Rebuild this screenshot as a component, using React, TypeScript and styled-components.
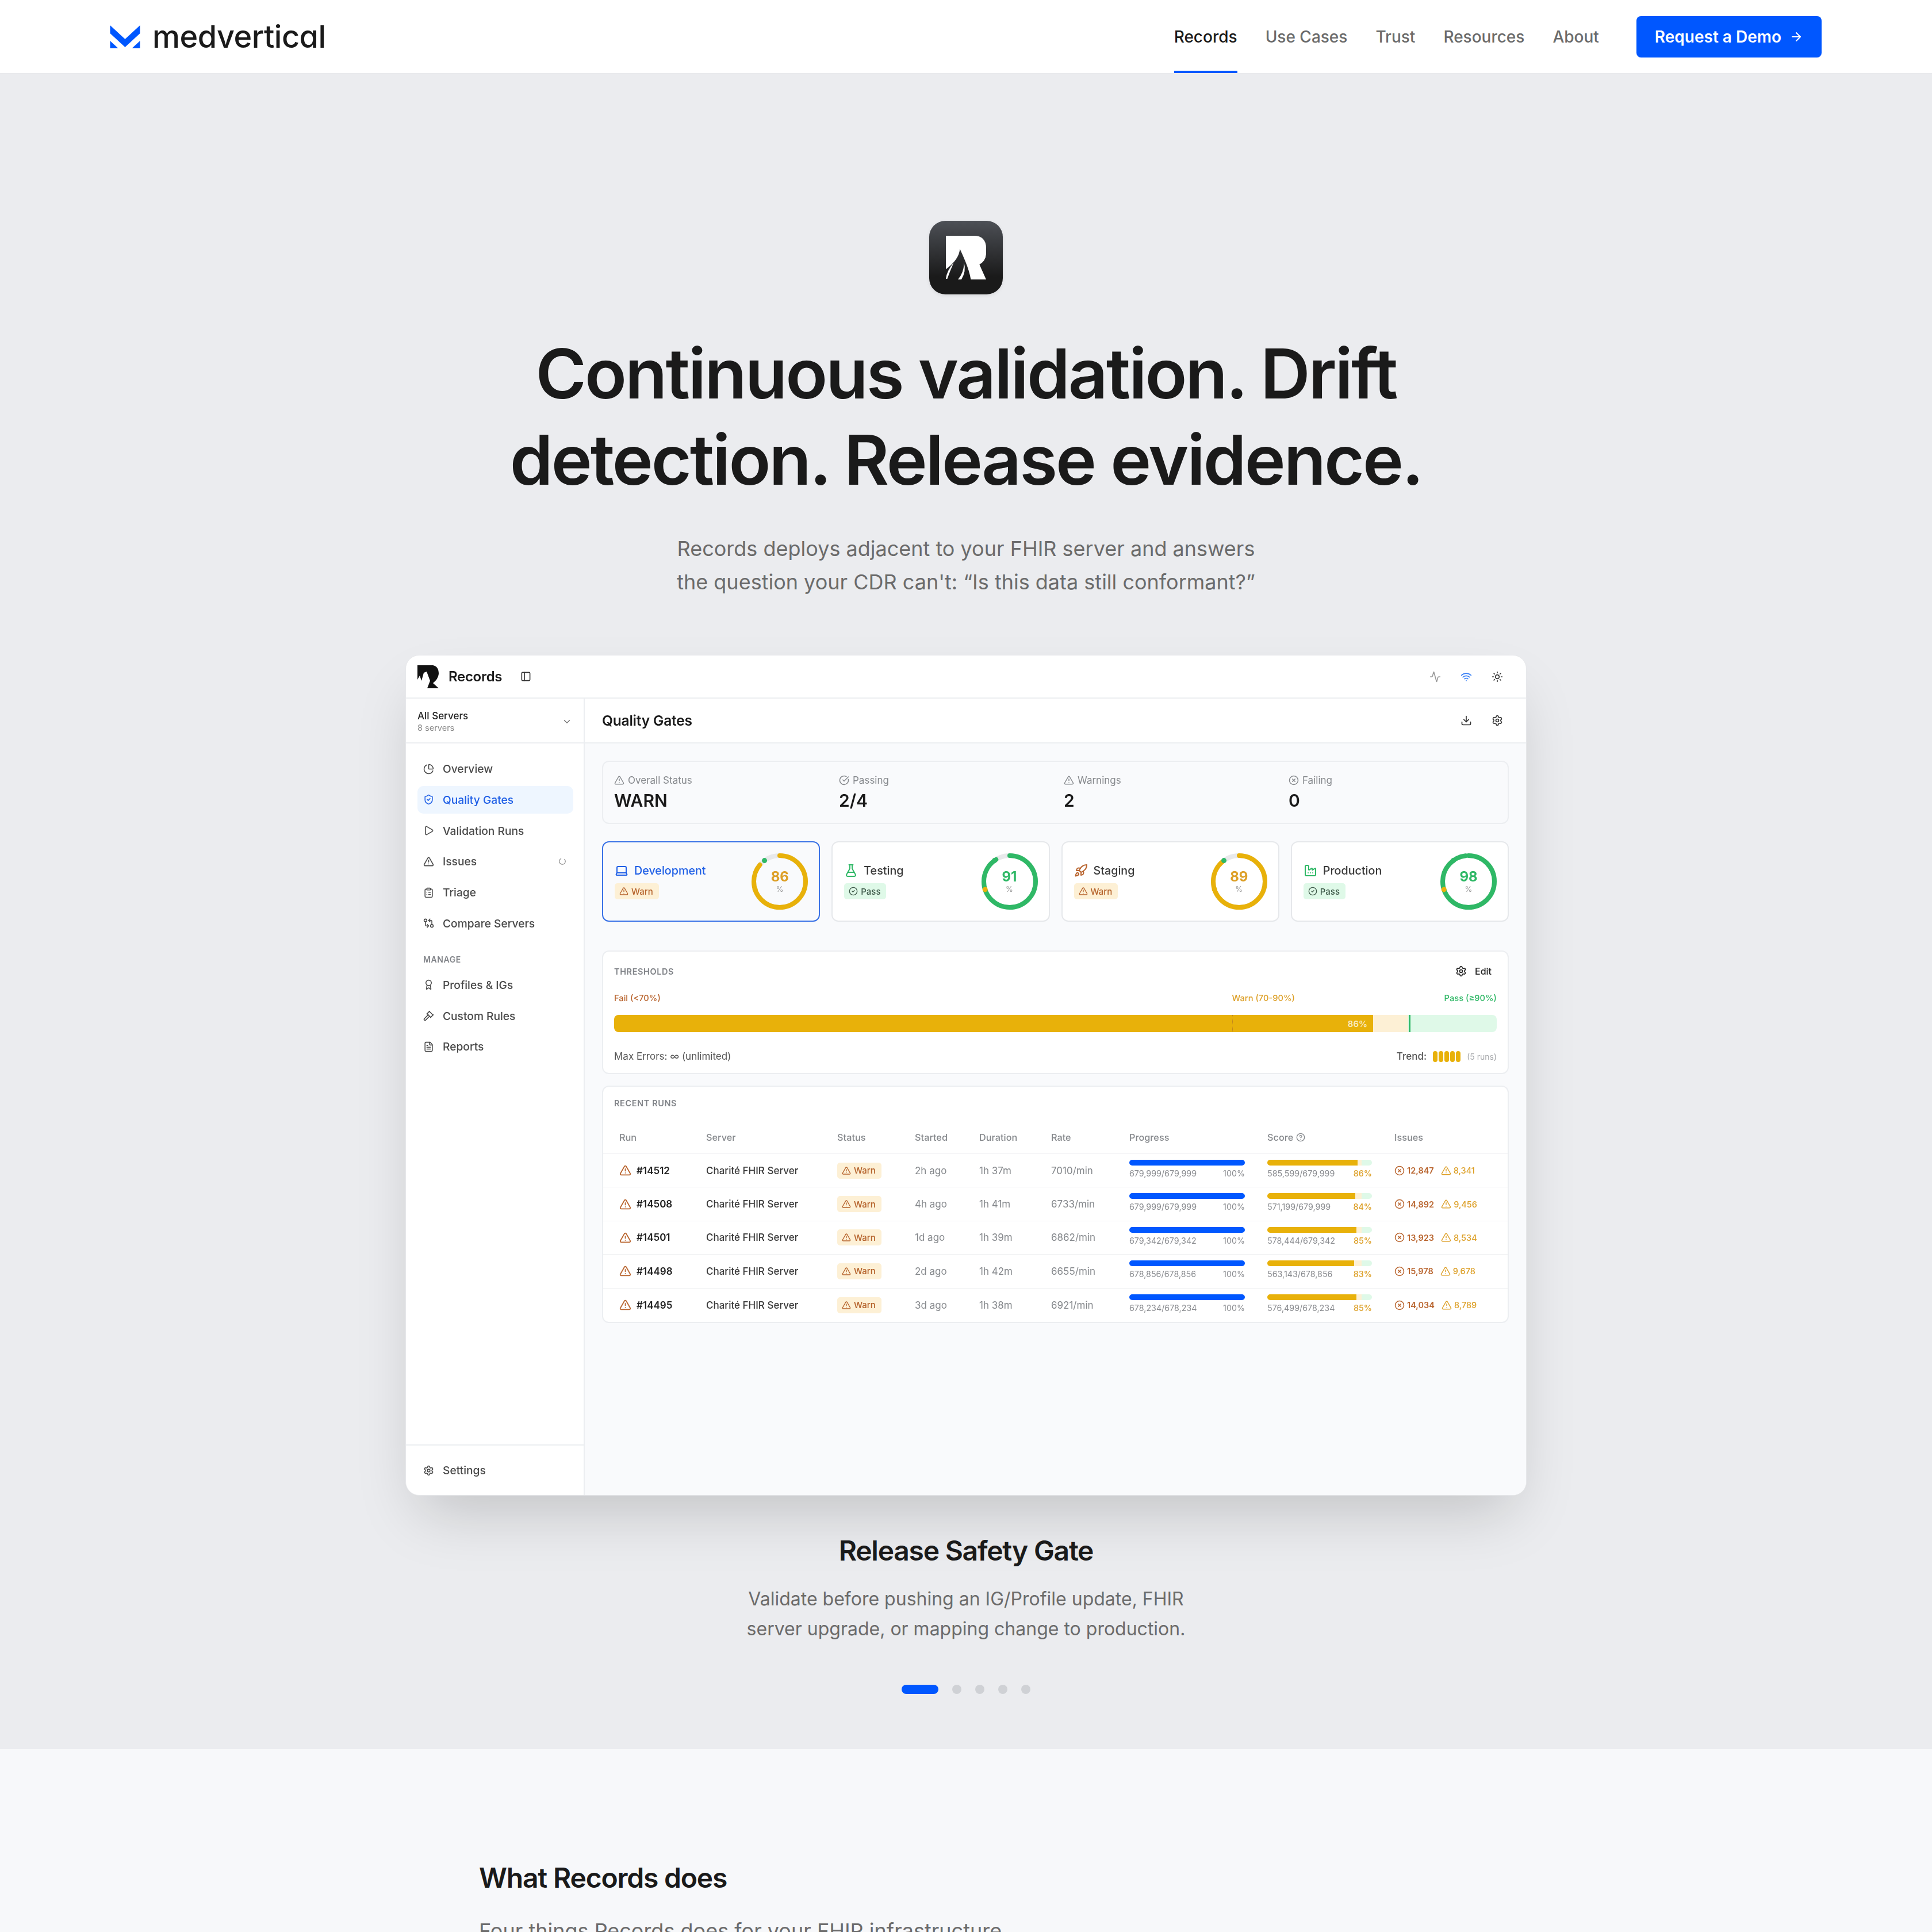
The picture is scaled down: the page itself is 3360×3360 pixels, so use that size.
import * as React from "react";
import styled, { createGlobalStyle } from "styled-components";
import {
    Activity, ArrowRight, Award, ChartPie, ChevronDown, CircleCheck, CircleCheckBig, CircleHelp, CircleX,
    ClipboardList, Download, Factory, FileText, FlaskConical, Gavel, GitCompareArrows, Laptop, LoaderCircle,
    PanelLeft, Play, Rocket, Settings, ShieldCheck, Sun, TriangleAlert, Wifi
} from "lucide-react";

const BRAND = "#0057ff";
const APP_BLUE = "#1f5fe6";
const WARN = "#e8b10a";
const WARN_TEXT = "#dda028";
const FAIL_TEXT = "#b9652f";
const PASS = "#2fb866";

const GlobalStyle = createGlobalStyle`
    html, body {
        margin: 0;
        padding: 0;
        background: #f7f8fa;
    }
    body {
        font-family: Inter, "Liberation Sans", sans-serif;
        color: #1a1a1a;
    }
    #root {
        height: 3360px;
        overflow: hidden;
    }
`;

const Header = styled.header`
    height: 128px;
    box-sizing: border-box;
    background: #fff;
    border-bottom: 1px solid #e8e9ec;
    padding: 0 192px 0 191px;
    display: flex;
    align-items: stretch;
    justify-content: space-between;
`;

const Brand = styled.div`
    display: flex;
    align-items: center;
    gap: 21px;
`;

const Wordmark = styled.span`
    font-size: 54px;
    font-weight: 500;
    letter-spacing: -0.5px;
    font-feature-settings: "cv11";
    color: #1a1a1a;
    line-height: 1;
`;

const TopNav = styled.nav`
    display: flex;
    align-items: stretch;
    gap: 49px;
`;

const TopLink = styled.a<{ $active?: boolean }>`
    display: flex;
    align-items: center;
    box-sizing: border-box;
    font-size: 28px;
    font-weight: 500;
    color: ${(p) => (p.$active ? "#1a1a1a" : "#6b6b6b")};
    border-bottom: 4px solid ${(p) => (p.$active ? BRAND : "transparent")};
    padding-top: 4px;
`;

const DemoButton = styled.button`
    align-self: center;
    height: 72px;
    margin-left: 16px;
    padding: 0 32px;
    display: flex;
    align-items: center;
    gap: 14px;
    border: 0;
    border-radius: 8px;
    background: ${BRAND};
    color: #fff;
    font-family: inherit;
    font-size: 28px;
    font-weight: 600;
`;

const Hero = styled.section`
    background: #ebecef;
    padding: 256px 0 96px;
    display: flex;
    flex-direction: column;
    align-items: center;
`;

const AppIcon = styled.div`
    width: 128px;
    height: 128px;
    border-radius: 28px;
    background: linear-gradient(180deg, #4d5056 0%, #1a1a1a 76%);
    box-shadow: 0 2px 6px rgba(0, 0, 0, 0.08);
    display: flex;
`;

const Title = styled.h1`
    margin: 63px 0 0;
    font-size: 120px;
    line-height: 150px;
    font-weight: 600;
    letter-spacing: -3px;
    text-align: center;
    color: #1a1a1a;
`;

const Lead = styled.p`
    margin: 50px 0 0;
    font-size: 36px;
    line-height: 58px;
    font-weight: 400;
    text-align: center;
    color: #6b6b6b;
`;

const Window = styled.div`
    margin-top: 98px;
    width: 1950px;
    height: 1462px;
    box-sizing: border-box;
    background: #fff;
    border: 1px solid #e7e8eb;
    border-radius: 24px;
    box-shadow: 0 50px 100px -24px rgba(0, 0, 0, 0.18);
    overflow: hidden;
    display: flex;
    flex-direction: column;
`;

const AppBar = styled.div`
    height: 75px;
    flex: none;
    box-sizing: border-box;
    border-bottom: 2px solid #eceef1;
    padding: 0 40px 0 20px;
    display: flex;
    align-items: center;
    filter: blur(0.4px);
`;

const AppName = styled.span`
    margin-left: 16px;
    font-size: 24px;
    font-weight: 600;
    letter-spacing: -0.3px;
`;

const PanelToggle = styled(PanelLeft)`
    margin-left: 32px;
    color: #333;
`;

const BarActions = styled.div`
    margin-left: auto;
    display: flex;
    align-items: center;
    gap: 34px;
`;

const AppBody = styled.div`
    flex: 1;
    min-height: 0;
    display: flex;
    filter: blur(0.4px);
`;

const Sidebar = styled.aside`
    width: 311px;
    flex: none;
    box-sizing: border-box;
    border-right: 2px solid #eceef1;
    display: flex;
    flex-direction: column;
`;

const ServerPicker = styled.div`
    height: 78px;
    flex: none;
    box-sizing: border-box;
    border-bottom: 2px solid #eceef1;
    padding: 3px 20px 0;
    display: flex;
    align-items: center;
    justify-content: space-between;
`;

const ServerName = styled.div`
    font-size: 17px;
    line-height: 22px;
    font-weight: 500;
    color: #222;
`;

const ServerCount = styled.div`
    font-size: 14.5px;
    line-height: 20px;
    color: #888;
`;

const SideNav = styled.nav`
    flex: 1;
    padding: 20px 18px 0 20px;
`;

const NavGroup = styled.div`
    display: flex;
    flex-direction: column;
    gap: 5.75px;
`;

const NavItem = styled.div<{ $active?: boolean }>`
    height: 48px;
    padding: 0 12px 0 10px;
    display: flex;
    align-items: center;
    gap: 15px;
    border-radius: 10px;
    font-size: 19.2px;
    font-weight: 500;
    color: ${(p) => (p.$active ? APP_BLUE : "#4a4a4a")};
    background: ${(p) => (p.$active ? "#eef6ff" : "transparent")};
`;

const NavSpinner = styled(LoaderCircle)`
    margin-left: auto;
    transform: rotate(-45deg);
    color: #888;
`;

const NavSection = styled.div`
    margin: 29px 10px 10px;
    font-size: 14px;
    line-height: 20px;
    font-weight: 600;
    letter-spacing: 0.6px;
    color: #808388;
`;

const SideFooter = styled.div`
    height: 88px;
    flex: none;
    box-sizing: border-box;
    border-top: 2px solid #eceef1;
    padding: 0 30px;
    display: flex;
    align-items: center;
    gap: 15px;
    font-size: 19.2px;
    font-weight: 500;
    color: #4a4a4a;
`;

const Main = styled.main`
    flex: 1;
    min-width: 0;
    background: #f9fafc;
    display: flex;
    flex-direction: column;
`;

const MainHead = styled.div`
    height: 78px;
    flex: none;
    box-sizing: border-box;
    background: #fff;
    border-bottom: 2px solid #eceef1;
    padding: 0 40px 0 30px;
    display: flex;
    align-items: center;
    justify-content: space-between;
`;

const MainTitle = styled.h2`
    margin: 0;
    font-size: 24.5px;
    font-weight: 600;
    letter-spacing: -0.2px;
`;

const Content = styled.div`
    padding: 30px 30px 0;
    display: flex;
    flex-direction: column;
`;

const Summary = styled.div`
    height: 110px;
    box-sizing: border-box;
    border: 2px solid #eceef1;
    border-radius: 12px;
    padding-left: 19px;
    display: grid;
    grid-template-columns: repeat(4, 391px);
    align-content: center;
`;

const SummaryLabel = styled.div`
    display: flex;
    align-items: center;
    gap: 6px;
    font-size: 17px;
    line-height: 22px;
    color: #85888c;
`;

const SummaryValue = styled.div`
    margin-top: 5px;
    font-size: 30px;
    line-height: 38px;
    font-weight: 600;
    color: #1a1a1a;
`;

const EnvGrid = styled.div`
    margin-top: 30px;
    display: grid;
    grid-template-columns: repeat(4, 1fr);
    gap: 20px;
`;

const EnvCard = styled.div<{ $active?: boolean }>`
    height: 140px;
    box-sizing: border-box;
    border: ${(p) => (p.$active ? `2px solid #3a72e6` : "2px solid #e6e8eb")};
    border-radius: 12px;
    background: ${(p) => (p.$active ? "#f9fafc" : "#fff")};
    padding: 0 19px 0 20px;
    display: flex;
    align-items: center;
    justify-content: space-between;
`;

const EnvName = styled.div<{ $active?: boolean }>`
    display: flex;
    align-items: center;
    gap: 10px;
    font-size: 19.7px;
    line-height: 24px;
    font-weight: 500;
    color: ${(p) => (p.$active ? APP_BLUE : "#3a3a3a")};
`;

const Badge = styled.span<{ $pass?: boolean }>`
    height: 28px;
    box-sizing: border-box;
    padding: 0 10px 0 8px;
    display: inline-flex;
    align-items: center;
    gap: 5px;
    border-radius: 5px;
    font-size: 15px;
    font-weight: 500;
    background: ${(p) => (p.$pass ? "#dff9e8" : "#fdf0d5")};
    color: ${(p) => (p.$pass ? "#3f5a4a" : "#b5622b")};
`;

const EnvBadgeRow = styled.div`
    margin-top: 10px;
`;

const RingBox = styled.div`
    position: relative;
    width: 98px;
    height: 98px;
    flex: none;
`;

const RingText = styled.div<{ $pass?: boolean }>`
    position: absolute;
    inset: 0;
    display: flex;
    flex-direction: column;
    align-items: center;
    justify-content: center;
    font-size: 24px;
    line-height: 26px;
    font-weight: 700;
    color: ${(p) => (p.$pass ? PASS : WARN_TEXT)};
`;

const RingUnit = styled.span`
    font-size: 13px;
    line-height: 16px;
    font-weight: 400;
    color: #999;
`;

const Card = styled.section<{ $top: number }>`
    margin-top: ${(p) => p.$top}px;
    box-sizing: border-box;
    background: #fff;
    border: 2px solid #eceef1;
    border-radius: 12px;
`;

const ThresholdBody = styled.div`
    padding: 22px 19px 17px;
`;

const CardHead = styled.div`
    height: 24px;
    display: flex;
    align-items: center;
    justify-content: space-between;
`;

const CardLabel = styled.div`
    font-size: 14.5px;
    font-weight: 600;
    letter-spacing: 0.6px;
    color: #808388;
`;

const EditLink = styled.div`
    display: flex;
    align-items: center;
    gap: 14px;
    padding-right: 9px;
    font-size: 16px;
    font-weight: 500;
    color: #222;
`;

const LimitRow = styled.div`
    margin-top: 25px;
    display: grid;
    grid-template-columns: 70% 1fr auto;
    font-size: 14.7px;
    line-height: 20px;
    font-weight: 500;
`;

const Limit = styled.span<{ $color: string }>`
    color: ${(p) => p.$color};
`;

const BigTrack = styled.div`
    position: relative;
    margin-top: 19px;
    height: 30px;
    border-radius: 8px;
    overflow: hidden;
    background: linear-gradient(to right, #fdf0d5 90%, #dff9e8 90%);
`;

const BigFill = styled.div`
    height: 100%;
    background: ${WARN};
    display: flex;
    align-items: center;
    justify-content: flex-end;
    padding-right: 10px;
    box-sizing: border-box;
    font-size: 15px;
    font-weight: 600;
    color: rgba(255, 255, 255, 0.75);
`;

const Marker = styled.div<{ $at: number; $kind: "warn" | "pass" }>`
    position: absolute;
    top: 0;
    bottom: 0;
    left: ${(p) => p.$at}%;
    border-left: ${(p) => (p.$kind === "pass" ? `3px solid ${PASS}` : "1px dotted rgba(168, 106, 42, 0.6)")};
`;

const ThresholdFoot = styled.div`
    margin-top: 30px;
    height: 24px;
    display: flex;
    align-items: center;
    justify-content: space-between;
    font-size: 17px;
    color: #555;
`;

const Trend = styled.div`
    display: flex;
    align-items: center;
    font-weight: 500;
`;

const TrendPills = styled.div`
    margin: 0 11px 0 11px;
    display: flex;
    gap: 2px;
`;

const TrendPill = styled.i`
    width: 8px;
    height: 19px;
    border-radius: 4px;
    background: ${WARN};
`;

const TrendNote = styled.span`
    font-size: 14px;
    font-weight: 400;
    color: #a5a7aa;
`;

const RunsLabel = styled(CardLabel)`
    padding: 19px 19px 0;
    line-height: 20px;
`;

const RunGrid = styled.div<{ $head?: boolean }>`
    display: grid;
    grid-template-columns: 151px 228px 135px 112px 125px 136px 240px 221px 1fr;
    align-items: center;
    padding-left: 28px;
    height: ${(p) => (p.$head ? "58px" : "58.4px")};
    box-sizing: border-box;
    margin-top: ${(p) => (p.$head ? "20px" : "0")};
    border-bottom: 1px solid #f0f1f3;
    font-size: 17px;
    &:last-child {
        border-bottom: 0;
    }
`;

const HeadCell = styled.div`
    display: flex;
    align-items: center;
    gap: 5px;
    font-size: 16.3px;
    font-weight: 500;
    color: #85888c;
`;

const RunId = styled.div`
    display: flex;
    align-items: center;
    gap: 9px;
    font-weight: 600;
    font-size: 17px;
    color: #222;
`;

const ServerCell = styled.div`
    font-weight: 500;
    color: #3a3a3a;
`;

const MutedCell = styled.div`
    color: #85888c;
`;

const MeterCell = styled.div<{ $width: number }>`
    width: ${(p) => p.$width}px;
    align-self: start;
    padding-top: 10px;
`;

const Track = styled.div<{ $score?: boolean }>`
    height: 10px;
    border-radius: 5px;
    overflow: hidden;
    background: ${(p) => (p.$score ? "linear-gradient(to right, #fdf0d5 90%, #dff9e8 90%)" : "#e8ecf2")};
`;

const Fill = styled.div<{ $score?: boolean }>`
    height: 100%;
    background: ${(p) => (p.$score ? WARN : BRAND)};
`;

const MeterText = styled.div`
    margin-top: 4px;
    display: flex;
    justify-content: space-between;
    font-size: 14.3px;
    line-height: 20px;
    color: #8a8c90;
`;

const Percent = styled.span<{ $warn?: boolean }>`
    font-weight: ${(p) => (p.$warn ? 500 : 400)};
    color: ${(p) => (p.$warn ? WARN_TEXT : "#8a8c90")};
`;

const IssueCell = styled.div`
    display: flex;
    align-items: center;
    gap: 4px;
    font-size: 14.5px;
    font-weight: 600;
`;

const IssueCount = styled.span<{ $warn?: boolean }>`
    margin-right: ${(p) => (p.$warn ? "0" : "8px")};
    font-weight: ${(p) => (p.$warn ? 500 : 600)};
    color: ${(p) => (p.$warn ? WARN_TEXT : FAIL_TEXT)};
`;

const CaptionTitle = styled.h3`
    margin: 67px 0 0;
    font-size: 48px;
    line-height: 58px;
    font-weight: 600;
    letter-spacing: -1.25px;
    color: #1a1a1a;
    text-align: center;
`;

const CaptionText = styled.p`
    margin: 29px 0 0;
    font-size: 32px;
    line-height: 52px;
    color: #6b6b6b;
    text-align: center;
`;

const Dots = styled.div`
    margin-top: 71px;
    display: flex;
    gap: 24px;
`;

const Dot = styled.span<{ $active?: boolean }>`
    width: ${(p) => (p.$active ? "64px" : "16px")};
    height: 16px;
    border-radius: 8px;
    background: ${(p) => (p.$active ? BRAND : "#cfd1d5")};
`;

const Features = styled.section`
    background: #f7f8fa;
    padding: 193px 833px 0;
`;

const FeaturesTitle = styled.h2`
    margin: 0;
    font-size: 48px;
    line-height: 62px;
    font-weight: 600;
    letter-spacing: -1.2px;
    color: #1a1a1a;
`;

const FeaturesLead = styled.p`
    margin: 32px 0 0;
    font-size: 36px;
    line-height: 58px;
    color: #6b6b6b;
    white-space: nowrap;
`;

function MedverticalLogo() {
    return (
        <svg width="53" height="40" viewBox="0 0 52 40" fill={BRAND}>
            <path d="M0 0 L26 24 L52 0 L52 14 L26 38 L0 14 Z" />
            <path d="M0 27 L14 40 H0 Z M52 27 L38 40 H52 Z" />
        </svg>
    );
}

function RecordsMark() {
    return (
        <svg width="128" height="128" viewBox="168 72 384 384">
            <path
                fill="#fff"
                d="M255 150 H400 Q465 150 465 215 V245 Q462 282 430 300 L465 378 H385 Q378 335 355 280 Q342 248 328 218 Q325 272 255 325 Z"
            />
            <path fill="#fff" d="M255 375 Q258 335 296 290 Q278 330 262 375 Z" />
            <path fill="#fff" d="M318 378 Q348 345 350 292 Q362 335 336 378 Z" />
        </svg>
    );
}

function SmallMark() {
    return (
        <svg width="38" height="40" viewBox="0 0 38 40" fill="#111">
            <path d="M0 0 H27 Q37 2 37 15 Q36 24 27 31 L37 40 H17 L22 27 L16 11 L11 13 L7 27 L4 18 L0 25 Z" />
        </svg>
    );
}

const RADIUS = 45;
const CIRC = 2 * Math.PI * RADIUS;

function ringPoint(pct: number) {
    const a = (pct / 100) * 2 * Math.PI - Math.PI / 2;
    return { x: 49 + RADIUS * Math.cos(a), y: 49 + RADIUS * Math.sin(a) };
}

function Ring({ score, pass }: { score: number; pass: boolean }) {
    const color = pass ? PASS : WARN;
    const warnDot = ringPoint(70);
    const passDot = ringPoint(90);
    return (
        <RingBox>
            <svg width="98" height="98" viewBox="0 0 98 98">
                <circle cx="49" cy="49" r={RADIUS} fill="none" stroke="#e8e9eb" strokeWidth="8" />
                <circle
                    cx="49"
                    cy="49"
                    r={RADIUS}
                    fill="none"
                    stroke={color}
                    strokeWidth="8"
                    strokeLinecap="round"
                    strokeDasharray={`${(score / 100) * CIRC} ${CIRC}`}
                    transform="rotate(-90 49 49)"
                />
                <circle cx={warnDot.x} cy={warnDot.y} r="4.5" fill={WARN} />
                <circle cx={passDot.x} cy={passDot.y} r="4.5" fill={PASS} />
            </svg>
            <RingText $pass={pass}>
                {score}
                <RingUnit>%</RingUnit>
            </RingText>
        </RingBox>
    );
}

function StatusBadge({ pass }: { pass?: boolean }) {
    return (
        <Badge $pass={pass}>
            {pass ? <CircleCheck size={16} /> : <TriangleAlert size={16} />}
            {pass ? "Pass" : "Warn"}
        </Badge>
    );
}

const environments = [
    { name: "Development", score: 86, pass: false, active: true, icon: <Laptop size={24} color={APP_BLUE} /> },
    { name: "Testing", score: 91, pass: true, active: false, icon: <FlaskConical size={24} color={PASS} /> },
    { name: "Staging", score: 89, pass: false, active: false, icon: <Rocket size={24} color="#b9652f" /> },
    { name: "Production", score: 98, pass: true, active: false, icon: <Factory size={24} color={PASS} /> }
];

const runs = [
    { id: "#14512", started: "2h ago", duration: "1h 37m", rate: "7010/min", total: "679,999/679,999", score: "585,599/679,999", pct: 86, errors: "12,847", warnings: "8,341" },
    { id: "#14508", started: "4h ago", duration: "1h 41m", rate: "6733/min", total: "679,999/679,999", score: "571,199/679,999", pct: 84, errors: "14,892", warnings: "9,456" },
    { id: "#14501", started: "1d ago", duration: "1h 39m", rate: "6862/min", total: "679,342/679,342", score: "578,444/679,342", pct: 85, errors: "13,923", warnings: "8,534" },
    { id: "#14498", started: "2d ago", duration: "1h 42m", rate: "6655/min", total: "678,856/678,856", score: "563,143/678,856", pct: 83, errors: "15,978", warnings: "9,678" },
    { id: "#14495", started: "3d ago", duration: "1h 38m", rate: "6921/min", total: "678,234/678,234", score: "576,499/678,234", pct: 85, errors: "14,034", warnings: "8,789" }
];

export default function App() {
    return (
        <>
            <GlobalStyle />
            <Header>
                <Brand>
                    <MedverticalLogo />
                    <Wordmark>medvertical</Wordmark>
                </Brand>
                <TopNav>
                    <TopLink $active>Records</TopLink>
                    <TopLink>Use Cases</TopLink>
                    <TopLink>Trust</TopLink>
                    <TopLink>Resources</TopLink>
                    <TopLink>About</TopLink>
                    <DemoButton>
                        Request a Demo
                        <ArrowRight size={24} />
                    </DemoButton>
                </TopNav>
            </Header>

            <Hero>
                <AppIcon>
                    <RecordsMark />
                </AppIcon>
                <Title>
                    Continuous validation. Drift
                    <br />
                    detection. Release evidence.
                </Title>
                <Lead>
                    Records deploys adjacent to your FHIR server and answers
                    <br />
                    the question your CDR can't: “Is this data still conformant?”
                </Lead>

                <Window>
                    <AppBar>
                        <SmallMark />
                        <AppName>Records</AppName>
                        <PanelToggle size={19} />
                        <BarActions>
                            <Activity size={20} color="#9a9a9a" />
                            <Wifi size={20} color="#3b82f6" />
                            <Sun size={20} color="#333" />
                        </BarActions>
                    </AppBar>
                    <AppBody>
                        <Sidebar>
                            <ServerPicker>
                                <div>
                                    <ServerName>All Servers</ServerName>
                                    <ServerCount>8 servers</ServerCount>
                                </div>
                                <ChevronDown size={18} color="#777" />
                            </ServerPicker>
                            <SideNav>
                                <NavGroup>
                                    <NavItem><ChartPie size={19} />Overview</NavItem>
                                    <NavItem $active><ShieldCheck size={19} />Quality Gates</NavItem>
                                    <NavItem><Play size={19} />Validation Runs</NavItem>
                                    <NavItem><TriangleAlert size={19} />Issues<NavSpinner size={14} /></NavItem>
                                    <NavItem><ClipboardList size={19} />Triage</NavItem>
                                    <NavItem><GitCompareArrows size={19} />Compare Servers</NavItem>
                                </NavGroup>
                                <NavSection>MANAGE</NavSection>
                                <NavGroup>
                                    <NavItem><Award size={19} />Profiles &amp; IGs</NavItem>
                                    <NavItem><Gavel size={19} />Custom Rules</NavItem>
                                    <NavItem><FileText size={19} />Reports</NavItem>
                                </NavGroup>
                            </SideNav>
                            <SideFooter><Settings size={19} />Settings</SideFooter>
                        </Sidebar>

                        <Main>
                            <MainHead>
                                <MainTitle>Quality Gates</MainTitle>
                                <BarActions>
                                    <Download size={20} color="#333" />
                                    <Settings size={20} color="#333" />
                                </BarActions>
                            </MainHead>
                            <Content>
                                <Summary>
                                    <div>
                                        <SummaryLabel><TriangleAlert size={18} />Overall Status</SummaryLabel>
                                        <SummaryValue>WARN</SummaryValue>
                                    </div>
                                    <div>
                                        <SummaryLabel><CircleCheckBig size={18} />Passing</SummaryLabel>
                                        <SummaryValue>2/4</SummaryValue>
                                    </div>
                                    <div>
                                        <SummaryLabel><TriangleAlert size={18} />Warnings</SummaryLabel>
                                        <SummaryValue>2</SummaryValue>
                                    </div>
                                    <div>
                                        <SummaryLabel><CircleX size={18} />Failing</SummaryLabel>
                                        <SummaryValue>0</SummaryValue>
                                    </div>
                                </Summary>

                                <EnvGrid>
                                    {environments.map((env) => (
                                        <EnvCard key={env.name} $active={env.active}>
                                            <div>
                                                <EnvName $active={env.active}>{env.icon}{env.name}</EnvName>
                                                <EnvBadgeRow><StatusBadge pass={env.pass} /></EnvBadgeRow>
                                            </div>
                                            <Ring score={env.score} pass={env.pass} />
                                        </EnvCard>
                                    ))}
                                </EnvGrid>

                                <Card $top={50}>
                                    <ThresholdBody>
                                        <CardHead>
                                            <CardLabel>THRESHOLDS</CardLabel>
                                            <EditLink><Settings size={20} />Edit</EditLink>
                                        </CardHead>
                                        <LimitRow>
                                            <Limit $color={FAIL_TEXT}>Fail (&lt;70%)</Limit>
                                            <Limit $color={WARN_TEXT}>Warn (70-90%)</Limit>
                                            <Limit $color={PASS}>Pass (≥90%)</Limit>
                                        </LimitRow>
                                        <BigTrack>
                                            <BigFill style={{ width: "86%" }}>86%</BigFill>
                                            <Marker $at={70} $kind="warn" />
                                            <Marker $at={90} $kind="pass" />
                                        </BigTrack>
                                        <ThresholdFoot>
                                            <span>Max Errors: ∞ (unlimited)</span>
                                            <Trend>
                                                Trend:
                                                <TrendPills>
                                                    <TrendPill /><TrendPill /><TrendPill /><TrendPill /><TrendPill />
                                                </TrendPills>
                                                <TrendNote>(5 runs)</TrendNote>
                                            </Trend>
                                        </ThresholdFoot>
                                    </ThresholdBody>
                                </Card>

                                <Card $top={20}>
                                    <RunsLabel>RECENT RUNS</RunsLabel>
                                    <RunGrid $head>
                                        <HeadCell>Run</HeadCell>
                                        <HeadCell>Server</HeadCell>
                                        <HeadCell>Status</HeadCell>
                                        <HeadCell>Started</HeadCell>
                                        <HeadCell>Duration</HeadCell>
                                        <HeadCell>Rate</HeadCell>
                                        <HeadCell>Progress</HeadCell>
                                        <HeadCell>Score <CircleHelp size={16} /></HeadCell>
                                        <HeadCell>Issues</HeadCell>
                                    </RunGrid>
                                    {runs.map((run) => (
                                        <RunGrid key={run.id}>
                                            <RunId><TriangleAlert size={21} color={FAIL_TEXT} />{run.id}</RunId>
                                            <ServerCell>Charité FHIR Server</ServerCell>
                                            <div><StatusBadge /></div>
                                            <MutedCell>{run.started}</MutedCell>
                                            <MutedCell>{run.duration}</MutedCell>
                                            <MutedCell>{run.rate}</MutedCell>
                                            <MeterCell $width={201}>
                                                <Track><Fill style={{ width: "100%" }} /></Track>
                                                <MeterText>
                                                    <span>{run.total}</span>
                                                    <Percent>100%</Percent>
                                                </MeterText>
                                            </MeterCell>
                                            <MeterCell $width={182}>
                                                <Track $score><Fill $score style={{ width: `${run.pct}%` }} /></Track>
                                                <MeterText>
                                                    <span>{run.score}</span>
                                                    <Percent $warn>{run.pct}%</Percent>
                                                </MeterText>
                                            </MeterCell>
                                            <IssueCell>
                                                <CircleX size={18} color={FAIL_TEXT} />
                                                <IssueCount>{run.errors}</IssueCount>
                                                <TriangleAlert size={18} color={WARN_TEXT} />
                                                <IssueCount $warn>{run.warnings}</IssueCount>
                                            </IssueCell>
                                        </RunGrid>
                                    ))}
                                </Card>
                            </Content>
                        </Main>
                    </AppBody>
                </Window>

                <CaptionTitle>Release Safety Gate</CaptionTitle>
                <CaptionText>
                    Validate before pushing an IG/Profile update, FHIR
                    <br />
                    server upgrade, or mapping change to production.
                </CaptionText>
                <Dots>
                    <Dot $active />
                    <Dot />
                    <Dot />
                    <Dot />
                    <Dot />
                </Dots>
            </Hero>

            <Features>
                <FeaturesTitle>What Records does</FeaturesTitle>
                <FeaturesLead>Four things Records does for your FHIR infrastructure.</FeaturesLead>
            </Features>
        </>
    );
}
